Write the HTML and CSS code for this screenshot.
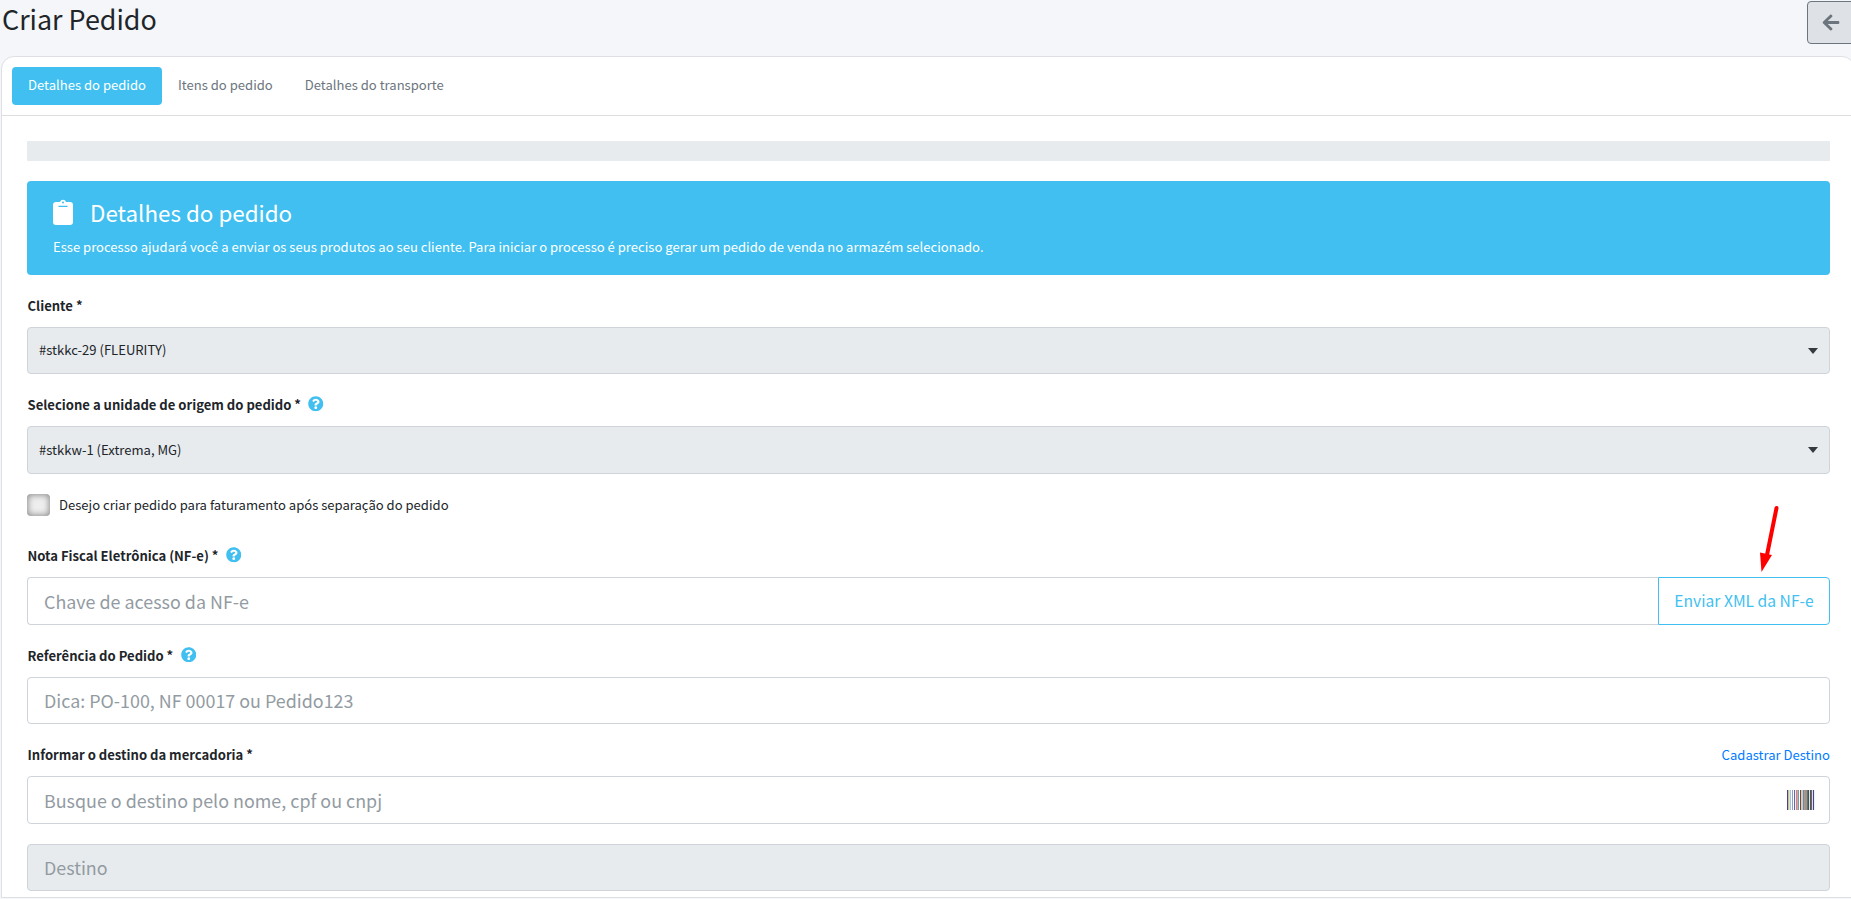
FILE: index.html
```
<!DOCTYPE html>
<html lang="pt-BR">
<head>
  <meta charset="UTF-8">
  <meta name="viewport" content="width=device-width, initial-scale=1.0">
  <title>Criar Pedido</title>
  <link rel="stylesheet" href="styles.css">
</head>
<body>
  <svg class="symbols">
    <symbol id="help" viewBox="0 0 512 512">
      <path fill="currentColor" d="M504 256c0 137-111 248-248 248S8 393 8 256 119 8 256 8s248 111 248 248zM262.700 90c-54.500 0-89.300 23-116.500 63.800-3.500 5.300-2.400 12.400 2.700 16.300l34.700 26.300c5.200 3.900 12.600 3 16.700-2.100 17.900-22.700 30.100-35.800 57.300-35.800 20.400 0 45.700 13.100 45.700 33 0 15-12.400 22.700-32.500 34C247.100 238.500 216 254.900 216 296v4c0 6.600 5.400 12 12 12h56c6.600 0 12-5.400 12-12v-1.300c0-28.500 83.200-29.600 83.200-106.700 0-58-60.200-102-116.500-102zM256 338c-25.400 0-46 20.600-46 46s20.600 46 46 46 46-20.600 46-46-20.600-46-46-46z"/>
    </symbol>
  </svg>

  <header class="page_header">
    <h1>Criar Pedido</h1>
    <button type="button" class="back_btn" aria-label="Voltar">
      <svg viewBox="0 0 448 512"><path fill="currentColor" d="M257.500 445.100l-22.200 22.200c-9.400 9.400-24.600 9.400-33.900 0L7 273c-9.400-9.400-9.400-24.600 0-33.900L201.400 44.700c9.400-9.400 24.600-9.400 33.900 0l22.200 22.200c9.500 9.500 9.300 25-.4 34.300L136.600 216H424c13.300 0 24 10.700 24 24v32c0 13.300-10.700 24-24 24H136.600l120.500 114.800c9.800 9.300 10 24.800.4 34.300z"/></svg>
    </button>
  </header>

  <main class="card">
    <ul class="tabs">
      <li class="active">Detalhes do pedido</li>
      <li>Itens do pedido</li>
      <li>Detalhes do transporte</li>
    </ul>

    <form class="card_body">
      <div class="progress"></div>

      <div class="callout">
        <h2>
          <svg viewBox="0 0 20 26"><path fill="#fff" fill-rule="evenodd" d="M3 3h4a3.100 3.100 0 0 1 6 0h4a3 3 0 0 1 3 3v17a3 3 0 0 1-3 3H3a3 3 0 0 1-3-3V6a3 3 0 0 1 3-3zM10 2.400a1 1 0 1 0 0 2 1 1 0 0 0 0-2zM5.500 6.700v1.200h9V6.700z"/></svg>
          <span>Detalhes do pedido</span>
        </h2>
        <p>Esse processo ajudará você a enviar os seus produtos ao seu cliente. Para iniciar o processo é preciso gerar um pedido de venda no armazém selecionado.</p>
      </div>

      <div class="group">
        <div class="label">Cliente *</div>
        <div class="field select disabled">#stkkc-29 (FLEURITY)</div>
      </div>

      <div class="group">
        <div class="label">Selecione a unidade de origem do pedido * <svg class="help"><use href="#help"/></svg></div>
        <div class="field select disabled">#stkkw-1 (Extrema, MG)</div>
      </div>

      <label class="check"><span class="box"></span>Desejo criar pedido para faturamento após separação do pedido</label>

      <div class="group">
        <div class="label">Nota Fiscal Eletrônica (NF-e) * <svg class="help"><use href="#help"/></svg></div>
        <div class="input_group">
          <input type="text" class="field" placeholder="Chave de acesso da NF-e">
          <button type="button" class="xml_btn">Enviar XML da NF-e</button>
          <svg class="arrow" viewBox="0 0 20 70">
            <path stroke="#f00" stroke-width="4" stroke-linecap="round" d="M16.500 5 7 52"/>
            <path fill="#f00" d="M0 49.500 12 52 1.500 69z"/>
          </svg>
        </div>
      </div>

      <div class="group">
        <div class="label">Referência do Pedido * <svg class="help"><use href="#help"/></svg></div>
        <input type="text" class="field" placeholder="Dica: PO-100, NF 00017 ou Pedido123">
      </div>

      <div class="group">
        <div class="label">Informar o destino da mercadoria * <a href="#">Cadastrar Destino</a></div>
        <div class="field search">
          <input type="text" placeholder="Busque o destino pelo nome, cpf ou cnpj">
          <span class="barcode"></span>
        </div>
      </div>

      <input type="text" class="field disabled" placeholder="Destino" disabled>
    </form>
  </main>
</body>
</html>
```

FILE: styles.css
```
*{
  margin: 0;
  padding: 0;
  box-sizing: border-box;
}
body{
  height: 899px;
  overflow: hidden;
  background-color: #f4f6f9;
  color: #212529;
  /* the latin letters of this family are Source Sans */
  font-family: "Noto Sans CJK SC", sans-serif;
  font-size: 13.07px;
  line-height: 24px;
}
.symbols{
  display: none;
}
.page_header{
  height: 56px;
  display: flex;
  justify-content: space-between;
  align-items: flex-start;
}
.page_header h1{
  padding-left: 2px;
  font-size: 26.900px;
  font-weight: 400;
  line-height: 38px;
}
.back_btn{
  width: 54px;
  height: 43px;
  margin: 1px -10px 0 0;
  padding-left: 14px;
  background-color: #dee2e6;
  border: 1px solid #6c757d;
  border-radius: 4px;
  color: #6c757d;
}
.back_btn svg{
  display: block;
  width: 18px;
  height: 19px;
}
.card{
  width: 1854px;
  height: 842px;
  margin-left: 1px;
  background-color: #fff;
  border: 1px solid #dfe0e4;
  border-radius: 13px 13px 0 0;
}
.tabs{
  height: 59px;
  padding: 10px;
  display: flex;
  border-bottom: 1px solid #dcdee0;
  list-style-type: none;
}
.tabs li{
  height: 38px;
  padding: 0 16px;
  border-radius: 4px;
  color: #6c757d;
  line-height: 36px;
}
.tabs .active{
  background-color: #41bff0;
  color: #fff;
}
.card_body{
  width: 1828px;
  padding: 25px 0 0 25px;
}
.progress{
  height: 20px;
  margin-bottom: 20px;
  background-color: #e7ebee;
  border-radius: 1px;
}
.callout{
  height: 93.600px;
  margin-bottom: 20px;
  padding: 14px 26px;
  background-color: #41bff0;
  border-radius: 4px;
  color: #fff;
}
.callout h2{
  display: flex;
  gap: 17px;
  font-size: 22.400px;
  font-weight: 400;
  line-height: 34px;
}
.callout h2 svg{
  width: 20px;
  height: 26px;
  margin-top: 4px;
}
.callout p{
  margin-top: 6px;
}
.group{
  margin-bottom: 20px;
}
.label{
  height: 32px;
  display: flex;
  padding-left: .5px;
  line-height: 21.500px;
  font-weight: 700;
}
.label a{
  margin-left: auto;
  color: #007bff;
  font-weight: 400;
  text-decoration: none;
}
.help{
  width: 15.500px;
  height: 15.500px;
  margin: 2px 0 0 7.500px;
  color: #41bff0;
}
.field{
  display: block;
  width: 100%;
  height: 47.500px;
  padding: 0 16px;
  background-color: #fff;
  border: 1px solid #ced4da;
  border-radius: 4px;
  font-family: inherit;
  font-size: 17.900px;
}
.disabled{
  background-color: #e7ebee;
}
input::placeholder{
  color: #939ba2;
}
.select{
  padding: 0 11px;
  display: flex;
  justify-content: space-between;
  align-items: center;
  font-size: 13.07px;
}
.select::after{
  content: "";
  margin-top: 1px;
  border: 5px solid transparent;
  border-top: 6px solid #343a40;
  border-bottom: 0;
}
.check{
  height: 51.500px;
  display: flex;
  gap: 9px;
  line-height: 21px;
}
.box{
  width: 23px;
  height: 22px;
  background-color: #eee;
  border-radius: 4px;
  box-shadow: inset 0 0 6px 1px #8c8c8c;
}
.input_group{
  position: relative;
  display: flex;
}
.input_group .field{
  flex: 1;
  border-right: 0;
  border-radius: 4px 0 0 4px;
}
.xml_btn{
  width: 172px;
  background-color: #fff;
  border: 1px solid #41bff0;
  border-radius: 0 4px 4px 0;
  color: #41bff0;
  font-family: inherit;
  font-size: 15.650px;
}
/* pointer drawn over the form, ends at the xml button */
.arrow{
  position: absolute;
  right: 50px;
  bottom: 51.500px;
  width: 20px;
  height: 70px;
}
.search{
  padding-right: 14px;
  display: flex;
  align-items: center;
}
.search input{
  flex: 1;
  border: 0;
  font: inherit;
}
.barcode{
  width: 28px;
  height: 20px;
  background: linear-gradient(90deg, #5b3a80 1px, #b9c6a4 1px 2px, #dde6c4 2px 3px, #a9c3ee 3px 4px, #fff 4px 5px, #8d9ed0 5px 6px, #fff 6px 7px, #7f5f90 7px 8px, #dff3f3 8px 9px, #c58a9a 9px 10px, #d9a3a0 10px 11px, #6fa3a0 11px 12px, #fff 12px 13px, #5c4670 13px 14px, #f0c690 14px 16px, #4d8fd6 16px 17px, #7aa5d2 17px 18px, #c98a43 18px 20px, #4079b8 20px 21px, #2e5482 21px 22px, #ede4c4 22px 23px, #8c4138 23px 24px, #2f7f83 24px 25px, #cfe4ef 25px 26px, #5b3a80 26px 27px, #e4f4fb 27px);
}
```
